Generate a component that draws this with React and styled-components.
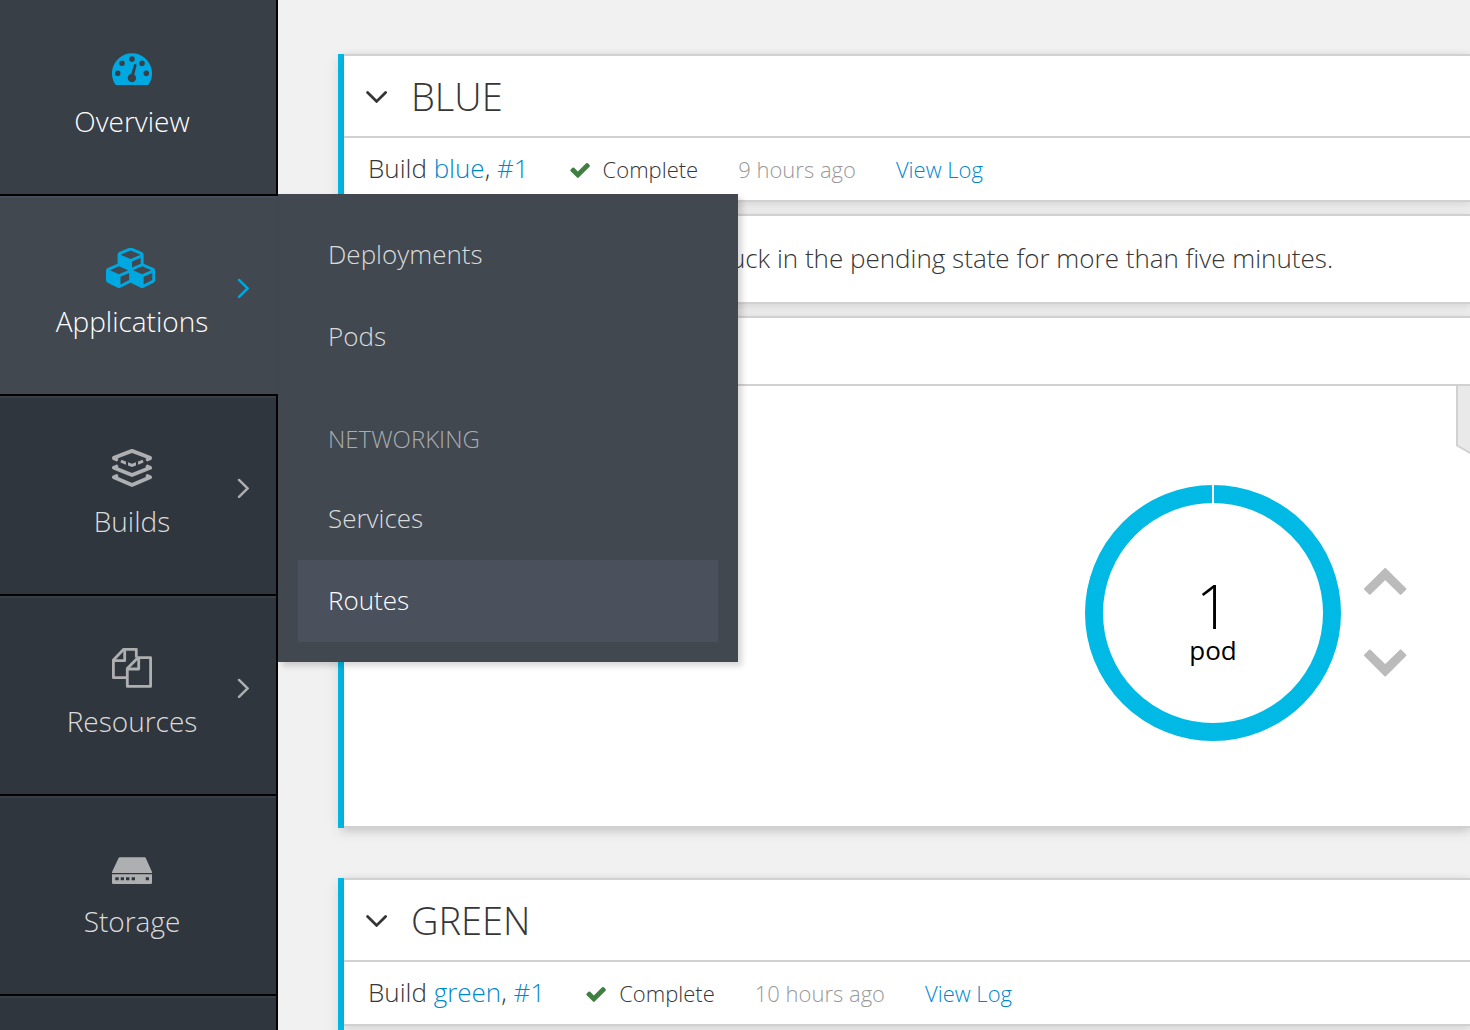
import React from 'react';
import styled, { createGlobalStyle } from 'styled-components';

const GlobalStyle = createGlobalStyle`
  *, *::before, *::after { box-sizing: border-box; }
  body {
    margin: 0;
    background: #f1f1f1;
    color: #363636;
    font-family: "Open Sans", "Noto Sans", sans-serif;
    font-size: 26px;
    font-weight: 300;
    line-height: 40px;
  }
  a { color: #0088ce; text-decoration: none; }
  h2, p, ul { margin: 0; padding: 0; }
  ul { list-style: none; }
  button { border: 0; padding: 0; background: none; font: inherit; color: inherit; cursor: pointer; }
  svg { display: block; }
`;

const Shell = styled.div`
  display: flex;
  height: 100vh;
  overflow: hidden;
`;

const Sidebar = styled.nav`
  position: relative;
  z-index: 1;
  flex: none;
  width: 278px;
  background: #30363e;
`;

const NavItem = styled.li`
  position: relative;
  border-bottom: 2px solid #030303;
  color: ${(p) => (p.$lit ? '#fff' : '#dbdbdb')};
`;

const NavLink = styled.a`
  display: grid;
  grid-template-columns: 1fr 12px;
  align-items: center;
  padding: ${(p) => (p.$first ? 48 : 52)}px 27px 53px;
  border-right: 2px solid ${(p) => (p.$open ? '#414850' : '#030303')};
  background: ${(p) => (p.$open ? '#414850' : p.$active ? '#393f46' : '#30363e')};
  box-shadow: inset 0 2px 0 ${(p) => (p.$first ? 'transparent' : p.$open ? '#484e59' : '#393f46')};
  color: inherit;
`;

const NavBody = styled.span`
  display: flex;
  flex-direction: column;
  align-items: center;
  gap: 13px;
  font-size: 28px;
`;

const NavIcon = styled.span`
  color: ${(p) => (p.$lit ? '#00a8e1' : '#aeafb1')};
`;

const NavArrow = styled(NavIcon)`
  padding-bottom: 13px;
`;

const Flyout = styled.div`
  position: absolute;
  left: 278px;
  top: -2px;
  width: 460px;
  padding: 20px;
  background: #414850;
  box-shadow: 4px 4px 6px rgba(0, 0, 0, 0.16);
`;

const FlyoutLink = styled.a`
  display: block;
  padding: 20px 30px 22px;
  background: ${(p) => (p.$active ? '#4a505c' : 'transparent')};
  color: ${(p) => (p.$active ? '#fff' : '#dbdbdb')};
`;

const FlyoutHeading = styled.div`
  padding: 41px 30px 19px;
  color: #a9acb0;
  font-size: 24px;
  text-transform: uppercase;
`;

const Main = styled.main`
  flex: 1;
  min-width: 0;
  display: flex;
  flex-direction: column;
  gap: 50px;
  padding: 54px 0 0 60px;
`;

const Service = styled.section`
  display: flex;
  flex: none;
  flex-direction: column;
  gap: 12px;
  border-left: 6px solid #00b9e4;
  background: #ececec;
  box-shadow: 0 4px 12px rgba(0, 0, 0, 0.1);
`;

const Panel = styled.div`
  border-top: 2px solid #d1d1d1;
  border-bottom: 2px solid #d1d1d1;
  background: #fff;
  box-shadow: 0 2px 8px rgba(0, 0, 0, 0.1);
`;

const ServiceHeader = styled.header`
  display: flex;
  align-items: center;
  gap: 23px;
  height: 82px;
  padding: 0 22px;
  border-bottom: 2px solid #d1d1d1;
`;

const ServiceTitle = styled.h2`
  font-size: 38px;
  font-weight: 300;
  line-height: 80px;
`;

const BuildRow = styled.div`
  display: flex;
  align-items: baseline;
  gap: 40px;
  height: 62px;
  padding: 10px 24px 0;
  font-size: 22px;
`;

const BuildName = styled.span`
  font-size: 26px;
`;

const Status = styled.span`
  display: flex;
  align-items: baseline;
  gap: 12px;
`;

const Age = styled.span`
  color: #999;
`;

const Notice = styled.p`
  padding: 22px 24px 24px 148px;
`;

const DeploymentBar = styled.div`
  height: 68px;
  border-bottom: 2px solid #d1d1d1;
`;

const DeploymentBody = styled.div`
  display: flex;
  justify-content: flex-end;
  gap: 49px;
  height: 440px;
`;

const Scaler = styled.div`
  display: flex;
  align-items: flex-start;
  gap: 22px;
  padding-top: 99px;
`;

const Donut = styled.div`
  display: grid;
  place-items: center;
  & > * { grid-area: 1 / 1; }
`;

const PodCount = styled.div`
  display: flex;
  flex-direction: column;
  align-items: center;
  padding-top: 26px;
  color: #000;
  font-weight: 400;
`;

const PodNumber = styled.span`
  font-size: 60px;
  font-weight: 300;
  line-height: 48px;
`;

const ScaleButtons = styled.div`
  display: flex;
  flex-direction: column;
  gap: 52px;
  padding-top: 82px;
`;

const DashboardIcon = () => (
  <svg width="40" height="40" viewBox="0 0 40 40" fill="currentColor" aria-hidden="true">
    <path
      fillRule="evenodd"
      d="M3.8 37A20 20 0 1 1 36.200 37ZM2.900 25.300a2.800 2.800 0 1 0 5.600 0a2.800 2.800 0 1 0 -5.600 0ZM7.200 15.300a2.800 2.800 0 1 0 5.600 0a2.800 2.800 0 1 0 -5.600 0ZM17.200 11a2.800 2.800 0 1 0 5.600 0a2.800 2.800 0 1 0 -5.600 0ZM27.200 15.300a2.800 2.800 0 1 0 5.600 0a2.800 2.800 0 1 0 -5.600 0ZM31.500 25.300a2.800 2.800 0 1 0 5.600 0a2.800 2.800 0 1 0 -5.600 0ZM19.400 25.800L21.800 16.900Q22.400 15.600 23.600 16Q24.800 16.400 24.500 17.700L22.300 26.500A4.200 4.200 0 1 1 19.400 25.800Z"
    />
  </svg>
);

const CubesIcon = () => (
  <svg width="52" height="40" viewBox="0 30 2300 1754" fill="currentColor" aria-hidden="true">
    <path d="M640 1632l384-192v-314l-384 164v342zm-64-454l404-173-404-173-404 173zm1088 454l384-192v-314l-384 164v342zm-64-454l404-173-404-173-404 173zm-448-293l384-165v-266l-384 164v267zm-64-379l441-189-441-189-441 189zm1088 518v416q0 36-19 67t-52 47l-448 224q-25 14-57 14t-57-14l-448-224q-4-2-7-4-2 2-7 4l-448 224q-25 14-57 14t-57-14l-448-224q-33-16-52-47t-19-67v-416q0-38 21.500-70t56.500-48l434-186v-400q0-38 21.500-70t56.500-48l448-192q23-10 50-10t50 10l448 192q35 16 56.500 48t21.500 70v400l434 186q36 16 57 48t21 70z" />
  </svg>
);

const BuildsIcon = () => (
  <svg width="40" height="40" viewBox="0 0 40 40" fill="none" stroke="currentColor" strokeWidth="3.800" strokeLinecap="round" strokeLinejoin="round" aria-hidden="true">
    <path d="M4.400 11.400L1.900 10.200V9.700L20 2.900L38.100 9.700V10.200L35.600 11.400" />
    <path d="M4.400 18.600L1.900 19.800L20 27L38.100 19.800L35.600 18.600" />
    <path d="M4.400 28.100L1.900 29.300L20 36.900L38.100 29.300L35.600 28.100" />
    <path stroke="none" fill="currentColor" d="M9.400 11.800L14 13.500V16.800L8.400 14.600ZM30.600 11.800L26 13.500V16.800L31.600 14.600ZM16 14.200L20 15.700L24 14.200V17.400L20 19.100L16 17.400Z" />
  </svg>
);

const ResourcesIcon = () => (
  <svg width="40" height="40" viewBox="0 0 40 40" fill="none" stroke="currentColor" strokeWidth="2.800" strokeLinejoin="round" aria-hidden="true">
    <path d="M24.300 9.500V1.300H11.700L1.400 11.900V29.700H15" />
    <path d="M12.700 1.300V12.700H1.400" />
    <path d="M25.900 9.700H38.600V38.400H15.300V20.400Z" />
    <path d="M26.700 9.700V21H15.300" />
  </svg>
);

const StorageIcon = () => (
  <svg width="40" height="40" viewBox="0 0 40 40" fill="currentColor" aria-hidden="true">
    <path d="M7.600 9.200H32.800Q33.500 9.200 33.800 9.900L40 24V25H0V24L6.600 9.900Q6.900 9.200 7.600 9.200Z" />
    <path fillRule="evenodd" d="M0 26.300H40V34.700Q40 36 38.700 36H1.300Q0 36 0 34.700ZM3.300 29.200V32.300H6.700V29.200ZM8.700 29.200V32.300H12V29.200ZM14 29.200V32.300H17.400V29.200ZM19.600 29.200V32.300H23V29.200ZM33.700 29.200V32.300H37V29.200Z" />
  </svg>
);

const AngleRight = () => (
  <svg width="12" height="20" viewBox="0 0 12 20" fill="none" stroke="currentColor" strokeWidth="2.400" strokeLinecap="round" aria-hidden="true">
    <path d="M2 1.900L10.600 10.400L2 18.800" />
  </svg>
);

const AngleDown = () => (
  <svg width="22" height="14" viewBox="0 0 22 14" fill="none" stroke="currentColor" strokeWidth="2.800" strokeLinecap="round" aria-hidden="true">
    <path d="M1.600 3.600L10.600 12.400L19.600 3.600" />
  </svg>
);

const CheckIcon = () => (
  <svg width="22" height="16" viewBox="100 260 1570 1270" fill="#3f7f42" aria-hidden="true">
    <path d="M1671 566q0 40-28 68l-724 724-136 136q-28 28-68 28t-68-28l-136-136-362-362q-28-28-28-68t28-68l136-136q28-28 68-28t68 28l294 295 656-657q28-28 68-28t68 28l136 136q28 28 28 68z" />
  </svg>
);

const ScaleChevron = ({ down }) => (
  <svg width="44" height="29" viewBox="0 0 44 29" fill="#bbb" stroke="#bbb" strokeWidth="2" strokeLinejoin="round" aria-hidden="true">
    <path d={down ? 'M22.200 27.500L2 7.300L6.800 2.500L22.200 17.400L37.600 2.500L42.400 7.300Z' : 'M22.200 2L2 22L6.800 26.800L22.200 11.900L37.600 26.800L42.400 22Z'} />
  </svg>
);

const DonutRing = () => (
  <svg width="256" height="256" viewBox="0 0 256 256" aria-hidden="true">
    <circle cx="128" cy="128" r="119" fill="none" stroke="#00b9e4" strokeWidth="18" />
    <path d="M128 0V19" stroke="#fff" strokeWidth="2" />
  </svg>
);

const Ribbon = () => (
  <svg width="14" height="70" viewBox="0 0 14 70" aria-hidden="true">
    <path d="M1 -2V59.500L16 68V-2Z" fill="#e9e9e9" stroke="#d1d1d1" strokeWidth="2" />
  </svg>
);

const NAV = [
  { label: 'Overview', Icon: DashboardIcon, active: true },
  { label: 'Applications', Icon: CubesIcon, arrow: true, open: true },
  { label: 'Builds', Icon: BuildsIcon, arrow: true },
  { label: 'Resources', Icon: ResourcesIcon, arrow: true },
  { label: 'Storage', Icon: StorageIcon },
];

function ApplicationsMenu() {
  return (
    <Flyout>
      <FlyoutLink href="#deployments">Deployments</FlyoutLink>
      <FlyoutLink href="#pods">Pods</FlyoutLink>
      <FlyoutHeading>Networking</FlyoutHeading>
      <FlyoutLink href="#services">Services</FlyoutLink>
      <FlyoutLink href="#routes" $active>Routes</FlyoutLink>
    </Flyout>
  );
}

function BuildPanel({ name, age }) {
  return (
    <Panel>
      <ServiceHeader>
        <button type="button" aria-label={`Collapse ${name}`}><AngleDown /></button>
        <ServiceTitle>{name.toUpperCase()}</ServiceTitle>
      </ServiceHeader>
      <BuildRow>
        <BuildName>
          Build <a href="#build">{name}</a>, <a href="#number">#1</a>
        </BuildName>
        <Status><CheckIcon />Complete</Status>
        <Age>{age}</Age>
        <a href="#log">View Log</a>
      </BuildRow>
    </Panel>
  );
}

export default function App() {
  return (
    <>
      <GlobalStyle />
      <Shell>
        <Sidebar>
          <ul>
            {NAV.map(({ label, Icon, arrow, open, active }, i) => (
              <NavItem key={label} $lit={open || active}>
                <NavLink href={`#${label.toLowerCase()}`} $first={i === 0} $open={open} $active={active}>
                  <NavBody>
                    <NavIcon $lit={open || active}><Icon /></NavIcon>
                    {label}
                  </NavBody>
                  {arrow && <NavArrow $lit={open}><AngleRight /></NavArrow>}
                </NavLink>
                {open && <ApplicationsMenu />}
              </NavItem>
            ))}
            <NavItem>
              <NavLink href="#monitoring" aria-label="Monitoring"><NavBody /></NavLink>
            </NavItem>
          </ul>
        </Sidebar>
        <Main>
          <Service>
            <BuildPanel name="blue" age="9 hours ago" />
            <Panel>
              <Notice>The pod has been stuck in the pending state for more than five minutes.</Notice>
            </Panel>
            <Panel>
              <DeploymentBar />
              <DeploymentBody>
                <Scaler>
                  <Donut>
                    <DonutRing />
                    <PodCount><PodNumber>1</PodNumber>pod</PodCount>
                  </Donut>
                  <ScaleButtons>
                    <button type="button" aria-label="Scale up"><ScaleChevron /></button>
                    <button type="button" aria-label="Scale down"><ScaleChevron down /></button>
                  </ScaleButtons>
                </Scaler>
                <Ribbon />
              </DeploymentBody>
            </Panel>
          </Service>
          <Service>
            <BuildPanel name="green" age="10 hours ago" />
            <Panel>
              <DeploymentBar />
            </Panel>
          </Service>
        </Main>
      </Shell>
    </>
  );
}
